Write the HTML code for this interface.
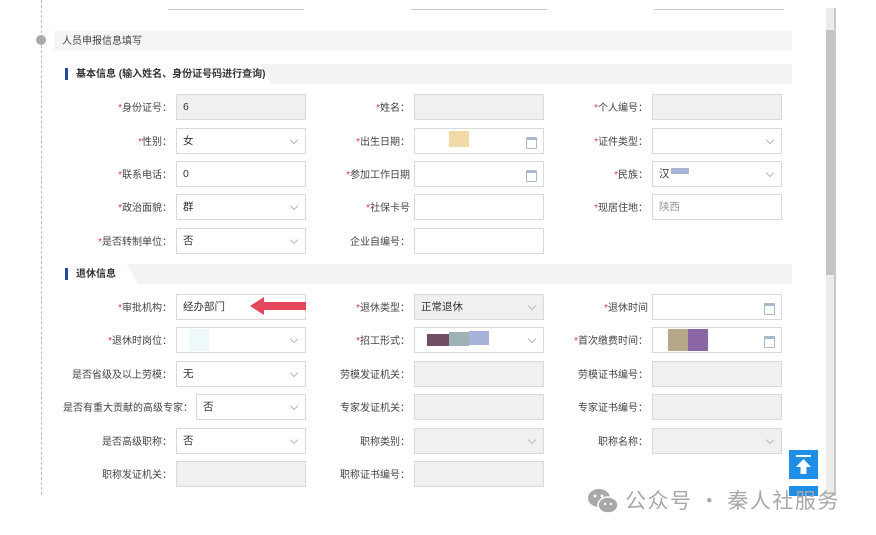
<!DOCTYPE html>
<html><head><meta charset="utf-8"><style>
*{margin:0;padding:0;box-sizing:border-box}
body{width:876px;height:535px;background:#fff;position:relative;overflow:hidden;font-family:"Liberation Sans","Noto Sans CJK SC",sans-serif;font-size:10.5px;color:#333}
.a{position:absolute}
.l{position:absolute;width:160px;text-align:right;line-height:26px;padding-top:2px;white-space:nowrap;color:#444;font-size:10px}
.l b{color:#e4393c;font-weight:normal}
.i{position:absolute;width:130px;height:26px;border:1px solid #d9d9d9;background:#fff;line-height:24px;padding-left:6px;color:#333}
.g{background:#f0f0f0}
.s::after{content:"";position:absolute;right:8px;top:8px;width:5px;height:5px;border-right:1px solid #bbb;border-bottom:1px solid #bbb;transform:rotate(45deg)}
.c::after{content:"";position:absolute;right:6px;top:8px;width:9px;height:8px;border:1px solid #a9b9c9;border-top:3px solid #a9b9c9;border-radius:1px}
.blk{position:absolute;height:10px;top:8px}
</style></head><body>
<div class="a" style="left:41px;top:0;height:495px;border-left:1px dashed #bbb"></div>
<div class="a" style="left:36px;top:35px;width:10px;height:10px;border-radius:50%;background:#aaa"></div>
<div class="a" style="left:168px;top:9px;width:136px;border-top:1px solid #ccc"></div>
<div class="a" style="left:411px;top:9px;width:136px;border-top:1px solid #ccc"></div>
<div class="a" style="left:654px;top:9px;width:130px;border-top:1px solid #ccc"></div>
<div class="a" style="left:54px;top:31px;width:738px;height:19px;background:#f5f5f5;line-height:21px;padding-left:8px;color:#444;font-size:10px">人员申报信息填写</div>
<div class="a" style="left:54px;top:64px;width:738px;height:20px;background:#f3f3f3"></div>
<div class="a" style="left:54px;top:64px;width:210px;height:20px;background:#fff"></div>
<div class="a" style="left:250px;top:64px;width:30px;height:20px;background:linear-gradient(60deg,#fff 50%,#f3f3f3 51%)"></div>
<div class="a" style="left:65px;top:68px;width:3px;height:12px;background:#1f4c9c"></div>
<div class="a" style="left:76px;top:65px;line-height:20px;font-weight:bold;color:#333;font-size:10px">基本信息 (输入姓名、身份证号码进行查询)</div>

<div class="a" style="left:54px;top:264px;width:738px;height:20px;background:#f3f3f3"></div>
<div class="a" style="left:54px;top:264px;width:75px;height:20px;background:#fff"></div>
<div class="a" style="left:122px;top:264px;width:20px;height:20px;background:linear-gradient(60deg,#fff 50%,#f3f3f3 51%)"></div>
<div class="a" style="left:65px;top:268px;width:3px;height:12px;background:#1f4c9c"></div>
<div class="a" style="left:76px;top:265px;line-height:20px;font-weight:bold;color:#333;font-size:10px">退休信息</div>

<div class="l" style="left:12px;top:94px"><b>*</b>身份证号：</div><div class="i g" style="left:176px;top:94px">6</div>
<div class="l" style="left:250px;top:94px"><b>*</b>姓名：</div><div class="i g" style="left:414px;top:94px"></div>
<div class="l" style="left:488px;top:94px"><b>*</b>个人编号：</div><div class="i g" style="left:652px;top:94px"></div>

<div class="l" style="left:12px;top:128px"><b>*</b>性别：</div><div class="i s" style="left:176px;top:128px">女</div>
<div class="l" style="left:250px;top:128px"><b>*</b>出生日期：</div><div class="i c" style="left:414px;top:128px"><div class="blk" style="left:34px;width:20px;background:#f1d9a8;top:2px;height:16px"></div></div>
<div class="l" style="left:488px;top:128px"><b>*</b>证件类型：</div><div class="i s" style="left:652px;top:128px"></div>

<div class="l" style="left:12px;top:161px"><b>*</b>联系电话：</div><div class="i" style="left:176px;top:161px">0</div>
<div class="l" style="left:250px;top:161px"><b>*</b>参加工作日期</div><div class="i c" style="left:414px;top:161px"></div>
<div class="l" style="left:488px;top:161px"><b>*</b>民族：</div><div class="i s" style="left:652px;top:161px">汉<div class="blk" style="left:18px;width:18px;background:#aab4d8;top:6px;height:6px"></div></div>

<div class="l" style="left:12px;top:194px"><b>*</b>政治面貌：</div><div class="i s" style="left:176px;top:194px">群</div>
<div class="l" style="left:250px;top:194px"><b>*</b>社保卡号</div><div class="i" style="left:414px;top:194px"></div>
<div class="l" style="left:488px;top:194px"><b>*</b>现居住地：</div><div class="i" style="left:652px;top:194px;color:#999">陕西</div>

<div class="l" style="left:12px;top:228px"><b>*</b>是否转制单位：</div><div class="i s" style="left:176px;top:228px">否</div>
<div class="l" style="left:250px;top:228px">企业自编号：</div><div class="i" style="left:414px;top:228px"></div>

<div class="l" style="left:12px;top:294px"><b>*</b>审批机构：</div><div class="i" style="left:176px;top:294px">经办部门</div>
<svg class="a" style="left:250px;top:296px" width="56" height="20"><polygon points="0,10 14,1 14,6 56,6 56,14 14,14 14,19" fill="#e5475a"/></svg>
<div class="l" style="left:250px;top:294px"><b>*</b>退休类型：</div><div class="i g s" style="left:414px;top:294px">正常退休</div>
<div class="l" style="left:488px;top:294px"><b>*</b>退休时间</div><div class="i c" style="left:652px;top:294px"></div>

<div class="l" style="left:12px;top:327px"><b>*</b>退休时岗位：</div><div class="i s" style="left:176px;top:327px"><div class="blk" style="left:12px;width:20px;background:#eefafa;top:1px;height:22px"></div></div>
<div class="l" style="left:250px;top:327px"><b>*</b>招工形式：</div><div class="i s" style="left:414px;top:327px"><div class="blk" style="left:12px;width:22px;background:#6e4e60;top:6px;height:12px"></div><div class="blk" style="left:34px;width:20px;background:#9fb3b5;top:4px;height:14px"></div><div class="blk" style="left:54px;width:20px;background:#a8b3dc;top:3px;height:14px"></div></div>
<div class="l" style="left:488px;top:327px"><b>*</b>首次缴费时间：</div><div class="i c" style="left:652px;top:327px"><div class="blk" style="left:15px;width:20px;background:#b6a98a;top:1px;height:22px"></div><div class="blk" style="left:35px;width:20px;background:#8a66a4;top:1px;height:22px"></div></div>

<div class="l" style="left:12px;top:361px">是否省级及以上劳模：</div><div class="i s" style="left:176px;top:361px">无</div>
<div class="l" style="left:250px;top:361px">劳模发证机关：</div><div class="i g" style="left:414px;top:361px"></div>
<div class="l" style="left:488px;top:361px">劳模证书编号：</div><div class="i g" style="left:652px;top:361px"></div>

<div class="l" style="left:33px;top:394px">是否有重大贡献的高级专家：</div><div class="i s" style="left:196px;top:394px;width:110px">否</div>
<div class="l" style="left:250px;top:394px">专家发证机关：</div><div class="i g" style="left:414px;top:394px"></div>
<div class="l" style="left:488px;top:394px">专家证书编号：</div><div class="i g" style="left:652px;top:394px"></div>

<div class="l" style="left:12px;top:428px">是否高级职称：</div><div class="i s" style="left:176px;top:428px">否</div>
<div class="l" style="left:250px;top:428px">职称类别：</div><div class="i g s" style="left:414px;top:428px"></div>
<div class="l" style="left:488px;top:428px">职称名称：</div><div class="i g s" style="left:652px;top:428px"></div>

<div class="l" style="left:12px;top:461px">职称发证机关：</div><div class="i g" style="left:176px;top:461px"></div>
<div class="l" style="left:250px;top:461px">职称证书编号：</div><div class="i g" style="left:414px;top:461px"></div>

<div class="a" style="left:826px;top:8px;width:10px;height:488px;background:#ececec;border-right:2px solid #c8c8c8"></div>
<div class="a" style="left:826px;top:30px;width:8px;height:245px;background:#c4c4c4"></div>
<div class="a" style="left:789px;top:450px;width:29px;height:29px;background:#1e8ee6"></div>
<div class="a" style="left:796px;top:455px;width:15px;height:2px;background:#fff"></div>
<svg class="a" style="left:795px;top:458px" width="17" height="17"><polygon points="8.5,1 16,9 11.5,9 11.5,16 5.5,16 5.5,9 1,9" fill="#fff"/></svg>
<div class="a" style="left:789px;top:486px;width:29px;height:10px;background:#1e8ee6"></div>
<svg class="a" style="left:586px;top:486px" width="34" height="30"><ellipse cx="13" cy="12" rx="11" ry="9" fill="#a8a8a8"/><ellipse cx="22" cy="19" rx="10" ry="8" fill="#a8a8a8" stroke="#fff" stroke-width="1.5"/><circle cx="9" cy="10" r="1.5" fill="#fff"/><circle cx="16" cy="10" r="1.5" fill="#fff"/><circle cx="19" cy="18" r="1.2" fill="#fff"/><circle cx="25" cy="18" r="1.2" fill="#fff"/></svg>
<div class="a" style="left:625px;top:486px;font-size:21px;line-height:28px;color:#a8a8a8;font-family:'Noto Sans CJK SC',sans-serif;letter-spacing:1.5px">公众号 · 秦人社服务</div>
</body></html>
